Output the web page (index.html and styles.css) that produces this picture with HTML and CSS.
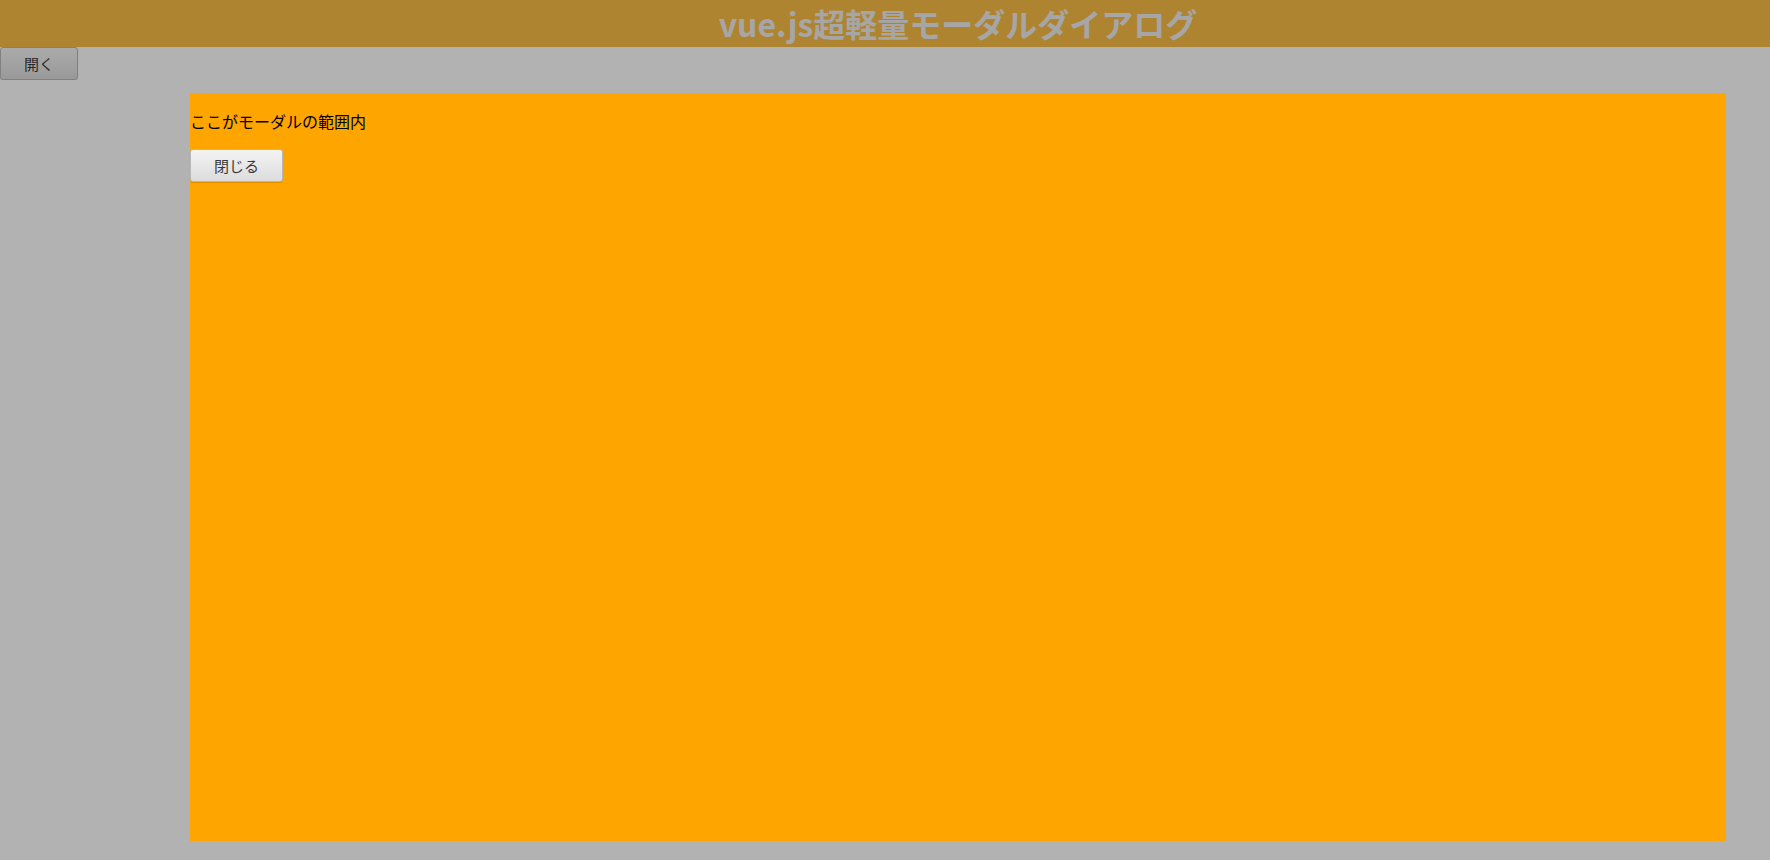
FILE: index.html
```html
<!DOCTYPE html>
<html lang="ja">
<head>
<meta charset="utf-8">
<title>vue.js超軽量モーダルダイアログ</title>
<link rel="stylesheet" href="styles.css">
</head>
<body>
<div id="app">
  <header class="site-header">
    <h1 class="site-title">vue.js超軽量モーダルダイアログ</h1>
  </header>
  <div class="toolbar">
    <button class="btn">開く</button>
  </div>
  <div class="overlay">
    <div class="modal">
      <p class="modal-text">ここがモーダルの範囲内</p>
      <button class="btn">閉じる</button>
    </div>
  </div>
</div>
</body>
</html>
```

FILE: styles.css
```css
html, body {
  margin: 0;
  padding: 0;
  background: #ffffff;
  font-family: "Noto Sans CJK JP", "Noto Sans", sans-serif;
  font-size: 16px;
  color: #000;
}

.site-header {
  background: #fbbd47;
  padding-left: 146px;
  text-align: center;
}

.site-title {
  margin: 0;
  font-size: 32px;
  font-weight: 700;
  color: #eeeeee;
  line-height: 47px;
}

.toolbar {
  display: flex;
}

.btn {
  font-family: "Noto Sans CJK JP", "Noto Sans", sans-serif;
  font-size: 15px;
  line-height: 19px;
  color: #3a3a3a;
  padding: 6px 23px;
  border: 1px solid #b8b8b8;
  border-radius: 3px;
  background: linear-gradient(#f4f4f4, #dcdcdc);
  box-shadow: 0 1px 1px rgba(0, 0, 0, 0.15);
  cursor: pointer;
}

.overlay {
  position: fixed;
  inset: 0;
  background: rgba(0, 0, 0, 0.3);
}

.modal {
  position: absolute;
  left: 190px;
  top: 93px;
  width: 1536px;
  height: 748px;
  background: #ffa500;
  display: flex;
  flex-direction: column;
  align-items: flex-start;
}

.modal-text {
  margin: 16px 0;
  font-size: 16px;
  line-height: 24px;
}
```
